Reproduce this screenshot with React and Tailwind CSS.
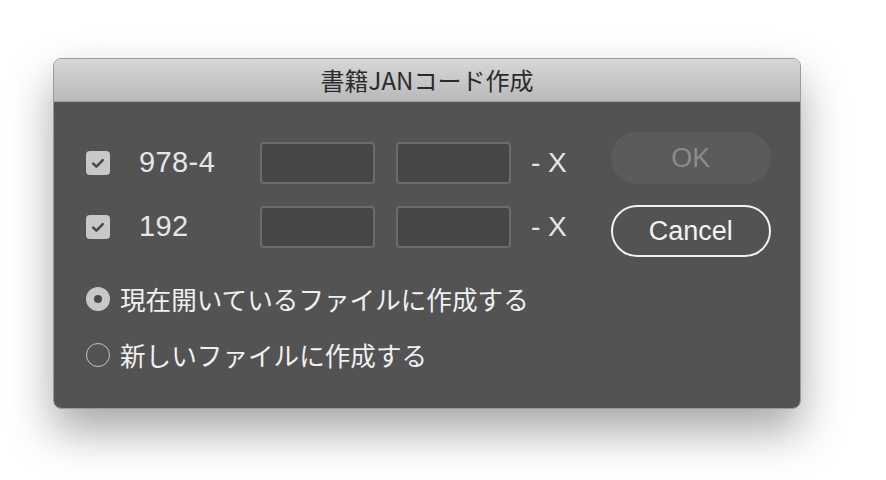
import React from "react";

const jp = { fontFamily: '"Noto Sans CJK JP", "Noto Sans", sans-serif' };
const latin = { fontFamily: '"Liberation Sans", Arial, sans-serif' };

const CheckBox = () => (
  <div className="w-[24px] h-[24px] rounded-[4px] bg-[#c8c8c8] flex items-center justify-center">
    <svg width="14" height="11" viewBox="0 0 14 11">
      <path d="M2.2 5.6 L5.4 8.6 L11.8 2.2" fill="none" stroke="#4a4a4a" strokeWidth="2.6" strokeLinecap="round" strokeLinejoin="round" />
    </svg>
  </div>
);

const Radio = ({ checked }) =>
  checked ? (
    <div className="w-[24px] h-[24px] rounded-full bg-[#c8c8c8] flex items-center justify-center">
      <div className="w-[8px] h-[8px] rounded-full bg-[#4a4a4a]" />
    </div>
  ) : (
    <div className="w-[24px] h-[24px] rounded-full border-[1.5px] border-[#c4c4c4]" />
  );

const Row = ({ label }) => (
  <div className="flex items-center h-[42px]">
    <CheckBox />
    <span className="ml-[29px] w-[121px] text-[29px] tracking-[0.4px] text-[#e6e6e6]" style={latin}>
      {label}
    </span>
    <div className="w-[115px] h-[42px] rounded-[4px] bg-[#464646] border-2 border-[#6b6b6b]" />
    <div className="ml-[21px] w-[115px] h-[42px] rounded-[4px] bg-[#464646] border-2 border-[#6b6b6b]" />
    <span className="ml-[20px] text-[28px] text-[#e6e6e6]" style={latin}>
      - X
    </span>
  </div>
);

export default function App() {
  return (
    <div className="w-[886px] h-[480px] bg-white pt-[58px] pl-[53px] overflow-hidden">
      <div className="w-[748px] rounded-[8px] overflow-hidden border border-[#9a9a9a] shadow-[0_22px_45px_rgba(0,0,0,0.35)]">
        <div
          className="h-[43px] flex items-center justify-center bg-gradient-to-b from-[#d7d7d7] to-[#b9b9b9] border-b border-[#a3a3a3] text-[24px] text-[#2b2b2b]"
          style={jp}
        >
          書籍JANコード作成
        </div>
        <div className="bg-[#535353] flex pl-[32px] pb-[39px]">
          <div className="pt-[40px] flex flex-col">
            <Row label="978-4" />
            <div className="mt-[22px]">
              <Row label="192" />
            </div>
            <div className="mt-[37px] flex items-center h-[28px]" style={jp}>
              <Radio checked />
              <span className="ml-[10px] text-[25.6px] text-[#f0f0f0]">現在開いているファイルに作成する</span>
            </div>
            <div className="mt-[28px] flex items-center h-[28px]" style={jp}>
              <Radio />
              <span className="ml-[10px] text-[25.6px] text-[#f0f0f0]">新しいファイルに作成する</span>
            </div>
          </div>
          <div className="ml-[44px] pt-[30px] flex flex-col">
            <div
              className="w-[160px] h-[52px] rounded-full bg-[#5b5b5b] flex items-center justify-center text-[27px] text-[#8c8c8c]"
              style={latin}
            >
              OK
            </div>
            <div
              className="mt-[21px] w-[160px] h-[52px] rounded-full border-2 border-[#f2f2f2] flex items-center justify-center text-[27px] text-[#f2f2f2]"
              style={latin}
            >
              Cancel
            </div>
          </div>
        </div>
      </div>
    </div>
  );
}
